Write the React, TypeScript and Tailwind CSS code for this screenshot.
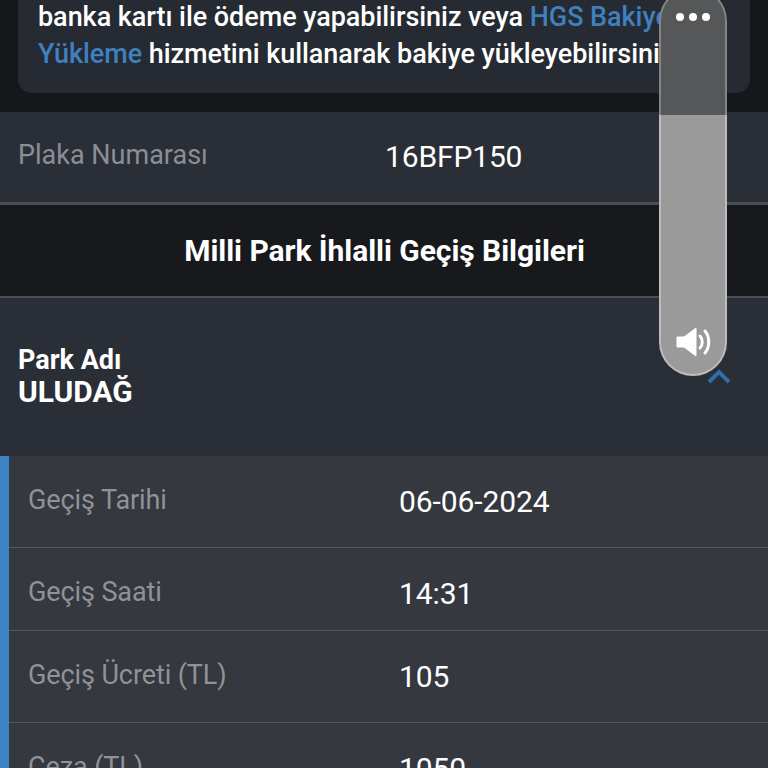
const font = "font-['Roboto','Noto_Sans',sans-serif]";

const details = [
  { label: "Geçiş Tarihi", value: "06-06-2024", row: "h-[92px] pb-[2px]" },
  { label: "Geçiş Saati", value: "14:31", row: "h-[83px] pt-[7px]" },
  { label: "Geçiş Ücreti (TL)", value: "105", row: "h-[92px] pb-[2px]" },
  { label: "Ceza (TL)", value: "1050", row: "h-[92px] pb-[2px]" },
];

const App = () => {
  return (
    <div className={`relative h-[768px] w-[768px] overflow-hidden bg-[#15171b] ${font}`}>
      {/* info card */}
      <div className="h-[112px] px-[18px]">
        <div className="flex h-[93px] flex-col justify-end rounded-b-[14px] bg-[#262a32] pb-[20px] pl-[20px]">
          <p className="whitespace-nowrap text-[27px] leading-[37px] font-medium tracking-[-0.05px] text-white">
            banka kartı ile ödeme yapabilirsiniz veya <span className="text-[#3f80bf]">HGS Bakiye</span>
          </p>
          <p className="whitespace-nowrap text-[27px] leading-[37px] font-medium tracking-[-0.05px] text-white">
            <span className="text-[#3f80bf]">Yükleme</span> hizmetini kullanarak bakiye yükleyebilirsiniz.
          </p>
        </div>
      </div>

      {/* plate */}
      <div className="flex h-[93px] items-center border-b-[3px] border-[#4a4e55] bg-[#2a2e36] pb-[3px] pl-[18px]">
        <span className="w-[367px] text-[27px] text-[#8b8e94]">Plaka Numarası</span>
        <span className="pt-[2px] text-[30px] tracking-[-0.15px] text-white">16BFP150</span>
      </div>

      {/* title */}
      <div className="flex h-[93px] items-center justify-center border-b-2 border-[#4a4e55] bg-[#17191d] pl-[1px]">
        <h1 className="text-[30px] font-bold tracking-[-0.05px] text-white">Milli Park İhlalli Geçiş Bilgileri</h1>
      </div>

      {/* park */}
      <div className="flex h-[158px] items-center justify-between bg-[#2a2e36] pr-[36px] pl-[18px]">
        <div className="mt-[-3px] text-white">
          <p className="text-[27px] leading-[32px] font-bold">Park Adı</p>
          <p className="text-[30px] leading-[32px] font-bold">ULUDAĞ</p>
        </div>
        <svg width="26" height="16" viewBox="0 0 26 16" fill="none" className="mt-[-3px]">
          <path d="M3 14L13 4l10 10" stroke="#2f6ea8" strokeWidth="4" />
        </svg>
      </div>

      {/* details */}
      <div className="border-l-[9px] border-[#3d84c6] bg-[#35383f]">
        {details.map((row) => (
          <div
            key={row.label}
            className={`flex ${row.row} items-center border-b border-[#52565e] pl-[19px]`}
          >
            <span className="w-[371px] text-[27px] tracking-[-0.1px] text-[#8f9298]">{row.label}</span>
            <span className="pt-[2px] text-[30px] tracking-[-0.1px] text-white">{row.value}</span>
          </div>
        ))}
      </div>

      {/* volume overlay */}
      <div className="absolute top-[-13px] left-[659px] flex h-[389px] w-[68px] flex-col">
        <div className="flex h-[128px] items-start justify-center gap-[5px] rounded-t-[34px] border-2 border-b-0 border-[#838485] bg-[#565758] pt-[24px]">
          <span className="h-[8px] w-[8px] rounded-full bg-white" />
          <span className="h-[8px] w-[8px] rounded-full bg-white" />
          <span className="h-[8px] w-[8px] rounded-full bg-white" />
        </div>
        <div className="flex flex-1 items-end justify-center rounded-b-[34px] border-2 border-t-0 border-[#bcbcbe] bg-[#9a9a9b] pb-[17px] pl-[2px]">
          <svg width="36" height="30" viewBox="0 0 36 30" fill="none">
            <path d="M1 10h7L20 1v28L8 20H1z" fill="#fff" strokeLinejoin="round" stroke="#fff" />
            <path d="M24 9c3 3 3 9 0 12" stroke="#fff" strokeWidth="3" strokeLinecap="round" />
            <path d="M29 4c5 6 5 16 0 22" stroke="#fff" strokeWidth="3" strokeLinecap="round" />
          </svg>
        </div>
      </div>
    </div>
  );
};

export default App;
